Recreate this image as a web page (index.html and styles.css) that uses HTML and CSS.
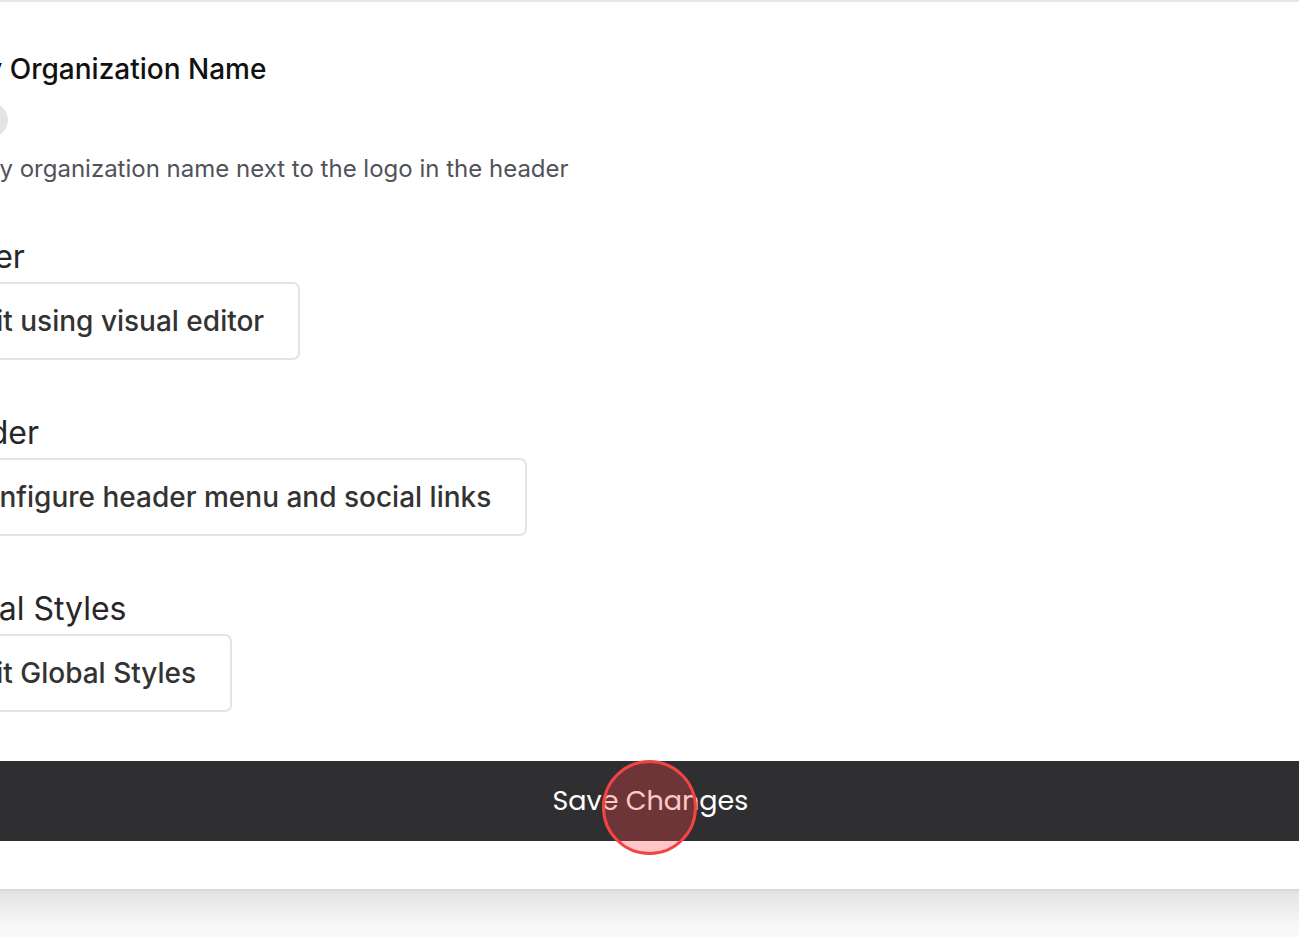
FILE: index.html
```html
<!DOCTYPE html>
<html lang="en">
<head>
<meta charset="utf-8">
<title>Site Settings</title>
<link rel="stylesheet" href="styles.css">
</head>
<body>
<div class="page">
  <div class="card">
    <div class="form">
      <section class="field field-toggle">
        <h3 class="label label-strong">Display Organization Name</h3>
        <div class="toggle"><span class="thumb"></span></div>
        <p class="hint">Display organization name next to the logo in the header</p>
      </section>
      <section class="field">
        <h3 class="label">Footer</h3>
        <button class="outline-btn">Edit using visual editor</button>
      </section>
      <section class="field">
        <h3 class="label">Header</h3>
        <button class="outline-btn">Configure header menu and social links</button>
      </section>
      <section class="field">
        <h3 class="label">Global Styles</h3>
        <button class="outline-btn">Edit Global Styles</button>
      </section>
    </div>
    <div class="savebar">
      <button class="save-btn">Save Changes</button>
    </div>
  </div>
  <div class="below"></div>
  <div class="click-dot"></div>
</div>
</body>
</html>
```
FILE: styles.css
```css
* { box-sizing: border-box; }
html, body {
  margin: 0;
  padding: 0;
  height: 100%;
  background: #f8f8f8;
  overflow: hidden;
}
body {
  font-family: Inter, "Noto Sans", "Liberation Sans", sans-serif;
  color: #27272a;
}
.page {
  position: relative;
  height: 937px;
  display: flex;
  flex-direction: column;
}
.card {
  background: #fff;
  border-top: 2px solid #e6e6e6;
  border-bottom: 2px solid #d9d9d9;
  overflow: hidden;
  padding-bottom: 48px;
}
.form {
  margin-left: -66px;
  padding-top: 49px;
  display: flex;
  flex-direction: column;
}
.field {
  display: flex;
  flex-direction: column;
  align-items: flex-start;
  margin-bottom: 55px;
}
.field:last-child { margin-bottom: 49px; }
.label {
  margin: 0 0 0 -6px;
  font-size: 32px;
  line-height: 36px;
  font-weight: 400;
  color: #27272a;
  white-space: nowrap;
}
.label-strong {
  margin-left: -30px;
  font-size: 28px;
  font-weight: 500;
  color: #111;
}
.toggle {
  margin-top: 16px;
  width: 74px;
  height: 34px;
  border-radius: 17px;
  background: #e4e4e7;
  position: relative;
}
.thumb {
  position: absolute;
  left: 3px;
  top: 3px;
  width: 28px;
  height: 28px;
  border-radius: 50%;
  background: #fff;
}
.hint {
  margin: 17px 0 0 -4px;
  font-size: 24px;
  line-height: 30px;
  color: #52525b;
  white-space: nowrap;
}
.outline-btn {
  margin-top: 7px;
  height: 78px;
  padding: 0 34px 0 26px;
  background: #fff;
  border: 2px solid #e4e4e4;
  border-radius: 7px;
  font-family: inherit;
  font-size: 28px;
  font-weight: 500;
  color: #333;
  white-space: nowrap;
}
.savebar {
  height: 80px;
  background: #2f2f31;
  display: flex;
  align-items: center;
  justify-content: center;
}
.save-btn {
  background: none;
  border: 0;
  color: #fff;
  font-family: Poppins, Inter, "Noto Sans", sans-serif;
  font-size: 27px;
  font-weight: 400;
  padding: 0;
  margin-left: 2px;
}
.below {
  flex: 1;
  background: linear-gradient(#e3e3e3, #f8f8f8 75%);
}
.click-dot {
  position: absolute;
  left: 602px;
  top: 760px;
  width: 95px;
  height: 95px;
  border-radius: 50%;
  background: rgba(255, 68, 68, 0.3);
  border: 3px solid #f24444;
  pointer-events: none;
}
```
